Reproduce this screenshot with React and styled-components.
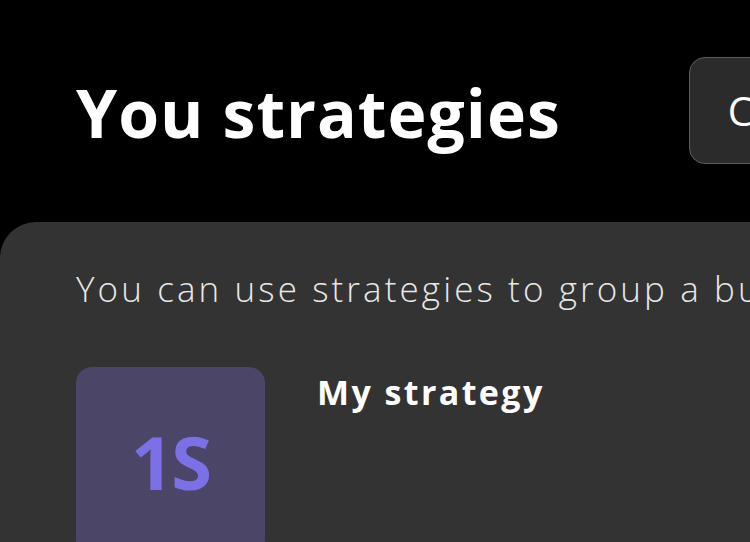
import React from 'react';
import styled, { createGlobalStyle } from 'styled-components';

const GlobalStyle = createGlobalStyle`
  html, body {
    margin: 0;
    padding: 0;
    background: #000000;
    overflow: hidden;
  }
  body {
    font-family: 'Open Sans', 'Liberation Sans', sans-serif;
    color: #ffffff;
  }
`;

const Page = styled.div`
  width: 750px;
  height: 542px;
  overflow: hidden;
  background: #000000;
`;

const Header = styled.div`
  display: flex;
  align-items: center;
  gap: 128px;
  padding: 57px 0 0 76px;
  white-space: nowrap;
`;

const Title = styled.h1`
  margin: 0;
  font-size: 66px;
  font-weight: 700;
  line-height: 1;
  letter-spacing: 1px;
  padding-top: 2px;
`;

const CreateButton = styled.button`
  flex: none;
  height: 107px;
  width: 260px;
  padding: 0 0 0 38px;
  text-align: left;
  background: #2b2b2b;
  border: 1.5px solid #5c5c5c;
  border-radius: 16px;
  color: #ffffff;
  font-family: inherit;
  font-size: 40px;
  font-weight: 500;
`;

const Card = styled.section`
  margin-top: 58px;
  width: 900px;
  min-height: 400px;
  background: #333333;
  border-radius: 36px;
  padding: 46px 0 0 76px;
  box-sizing: border-box;
`;

const Description = styled.p`
  margin: 0;
  font-size: 35px;
  font-weight: 300;
  line-height: 1.2;
  letter-spacing: 3.1px;
  color: #e8e8e8;
  white-space: nowrap;
`;

const StrategyRow = styled.div`
  display: flex;
  gap: 52px;
  margin-top: 57px;
`;

const Avatar = styled.div`
  flex: none;
  width: 189px;
  height: 189px;
  border-radius: 16px;
  background: #4b4668;
  display: flex;
  align-items: center;
  justify-content: center;
  color: #7c70e6;
  font-size: 74px;
  font-weight: 700;
  letter-spacing: -2px;
`;

const StrategyName = styled.h2`
  margin: 0;
  padding-top: 5px;
  font-size: 34px;
  font-weight: 700;
  line-height: 1.2;
  letter-spacing: 2.4px;
`;

export default function App() {
  return (
    <Page>
      <GlobalStyle />
      <Header>
        <Title>You strategies</Title>
        <CreateButton>Create</CreateButton>
      </Header>
      <Card>
        <Description>
          You can use strategies to group a bunch of your accounts together
        </Description>
        <StrategyRow>
          <Avatar>1S</Avatar>
          <StrategyName>My strategy</StrategyName>
        </StrategyRow>
      </Card>
    </Page>
  );
}
